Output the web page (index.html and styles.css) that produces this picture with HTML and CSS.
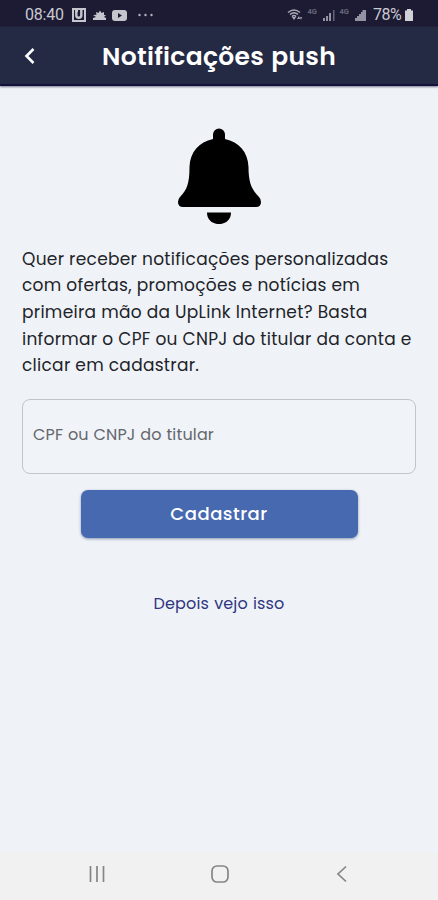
FILE: index.html
```html
<!DOCTYPE html>
<html lang="pt-BR">
<head>
<meta charset="utf-8">
<title>Notificações push</title>
<link rel="stylesheet" href="styles.css">
</head>
<body>
<div class="status">
  <span class="time">08:40</span>
  <svg class="left-icons" width="86" height="18" viewBox="0 0 86 18">
    <path fill="#c5c5ce" fill-rule="evenodd" d="M2 2h14v14H2zM4 4v10h10V4z"/>
    <path fill="none" stroke="#c5c5ce" stroke-width="2.4" d="M6.300 4v5.500q0 2.200 2.500 2.200t2.500-2.200V4M5 5h3"/>
    <path fill="#c5c5ce" d="M23 14v-2l3-1-3-2 3.500-.2L26 6l2.500 1L30 4.500 31.500 7 34 6v3l2 0-2 2 2 1v2z"/>
    <rect x="42" y="4" width="15" height="11" rx="3" fill="#c5c5ce"/>
    <path fill="#1c1b33" d="M48 7l4 2.500-4 2.500z"/>
    <g fill="#b4b4c0"><circle cx="69.500" cy="9" r="1.200"/><circle cx="75.500" cy="9" r="1.200"/><circle cx="81.500" cy="9" r="1.200"/></g>
  </svg>
  <svg class="right-icons" width="84" height="18" viewBox="0 0 84 18">
    <g fill="none" stroke="#a9a9b8" stroke-width="1.500"><path d="M1 6.500q6-5 12 0M3 8.500q4-3.500 8 0M5 10.600q2-2 4 0"/></g>
    <path fill="#a9a9b8" d="M5 11h4l-2 3zM10 13l2-3 1 3zM13 11h2l-1 3z"/>
    <g fill="#66667b" font-family="Roboto, sans-serif" font-size="7.500" font-weight="700"><text x="20.500" y="7.500">4G</text><text x="52.500" y="7.500">4G</text></g>
    <g fill="#9292a3"><path d="M36 12h2v3h-2zM39 10h2v5h-2zM42 7h2v8h-2z"/><path opacity=".6" d="M46 4h1.500v11H46z"/><path d="M68 15v-3h2v-2h2V8h2V6h1.500V4H79v11z"/></g>
  </svg>
  <span class="percent">78%</span>
  <svg class="battery" width="10" height="14" viewBox="0 0 10 14"><path fill="#d0d0d6" d="M3 1h4v1.500h2V13H1V2.500h2z"/></svg>
</div>
<header class="bar">
  <svg class="back" width="12" height="18" viewBox="0 0 12 18"><path fill="none" stroke="#fff" stroke-width="2.600" d="M9.500 2L2.500 9l7 7"/></svg>
  <h1>Notificações push</h1>
</header>
<main>
  <svg class="bell" width="84" height="96" viewBox="0 0 84 96">
    <path d="M36 11V6.500a6 6 0 0 1 12 0V11C62 14 71 24 71.500 39C71.500 55 75 62 82 69Q84 71 84 74Q84 79 79 79H6Q1 79 1 74Q1 71 3 69C10 62 12.500 55 12.500 39C13 24 22 14 36 11zM30 84.500H54C54 100 30 100 30 84.500z"/>
  </svg>
  <p class="message">
    <span class="line l1">Quer receber notificações personalizadas</span>
    <span class="line l2">com ofertas, promoções e notícias em</span>
    <span class="line l3">primeira mão da UpLink Internet? Basta</span>
    <span class="line l4">informar o CPF ou CNPJ do titular da conta e</span>
    <span class="line l5">clicar em cadastrar.</span>
  </p>
  <div class="field"><span class="line hint">CPF ou CNPJ do titular</span></div>
  <button class="submit">Cadastrar</button>
  <a class="later line">Depois vejo isso</a>
</main>
<nav>
  <svg width="18" height="18" viewBox="0 0 18 18"><path stroke="#858585" stroke-width="1.700" d="M2.500 1v16M9 1v16M15.500 1v16"/></svg>
  <svg width="20" height="20" viewBox="0 0 20 20"><rect x="1" y="2" width="16" height="16" rx="5" fill="none" stroke="#858585" stroke-width="1.700"/></svg>
  <svg width="12" height="18" viewBox="0 0 12 18"><path fill="none" stroke="#858585" stroke-width="1.700" d="M10 1.500L2 9l8 7.500"/></svg>
</nav>
</body>
</html>
```
FILE: styles.css
```css
* { box-sizing: border-box; }
body {
  margin: 0;
  width: 438px;
  height: 900px;
  display: flex;
  flex-direction: column;
  background: #eff3f8;
  font-family: Poppins, Inter, sans-serif;
  color: #222328;
  overflow: hidden;
}
.status {
  height: 27px;
  flex: none;
  display: flex;
  align-items: center;
  padding: 2px 24px 0 25px;
  background: #1c1b33;
  font: 16px/24px Roboto, sans-serif;
  color: #c9c9d1;
}
.time { width: 40px; letter-spacing: -.2px; }
.left-icons { margin-left: 5px; }
.right-icons { margin-left: auto; }
.percent { margin-left: 2px; width: 31px; letter-spacing: -.5px; }
.bar {
  height: 59px;
  flex: none;
  display: flex;
  align-items: center;
  padding-left: 24px;
  background: #242944;
  border-bottom: 2px solid #14123d;
  box-shadow: 0 1px 2px #77778f;
}
h1 {
  margin: 2px 0 0 66px;
  width: 234px;
  font-size: 25px;
  line-height: 36px;
  font-weight: 600;
  letter-spacing: .3px;
  white-space: nowrap;
  color: #fff;
  text-align: justify;
  text-align-last: justify;
}
main {
  flex: 1;
  display: flex;
  flex-direction: column;
  align-items: center;
  padding: 42px 22px 0;
}
.bell { flex: none; }
.message {
  align-self: flex-start;
  margin: 21.5px 0 0;
  font-size: 17px;
  line-height: 26.7px;
  letter-spacing: .28px;
}
.line {
  display: block;
  white-space: nowrap;
  text-align: justify;
  text-align-last: justify;
}
.l1 { width: 366px; }
.l2 { width: 338px; }
.l3 { width: 345px; }
.l4 { width: 389px; }
.l5 { width: 176px; }
.field {
  width: 394px;
  height: 75px;
  flex: none;
  margin-top: 19.5px;
  padding: 21px 10px;
  border: 1.5px solid #c3c4c8;
  border-radius: 8px;
  background: #f0f3f8;
}
.hint {
  width: 181px;
  font-size: 16px;
  line-height: 27px;
  letter-spacing: .15px;
  color: #65676c;
}
.submit {
  width: 277px;
  height: 48px;
  flex: none;
  margin-top: 16px;
  padding: 0;
  border: 0;
  border-radius: 7px;
  background: #4769b0;
  box-shadow: 0 1px 3px #8a97b0;
  color: #fff;
  font: 500 18px/48px Poppins, Inter, sans-serif;
  letter-spacing: .5px;
}
.later {
  width: 131px;
  margin-top: 52px;
  font-size: 16px;
  line-height: 28px;
  letter-spacing: .15px;
  color: #303681;
}
nav {
  height: 48px;
  flex: none;
  display: flex;
  align-items: center;
  justify-content: space-between;
  padding: 0 90px 4px 88px;
  background: #f1f1f1;
}
```
